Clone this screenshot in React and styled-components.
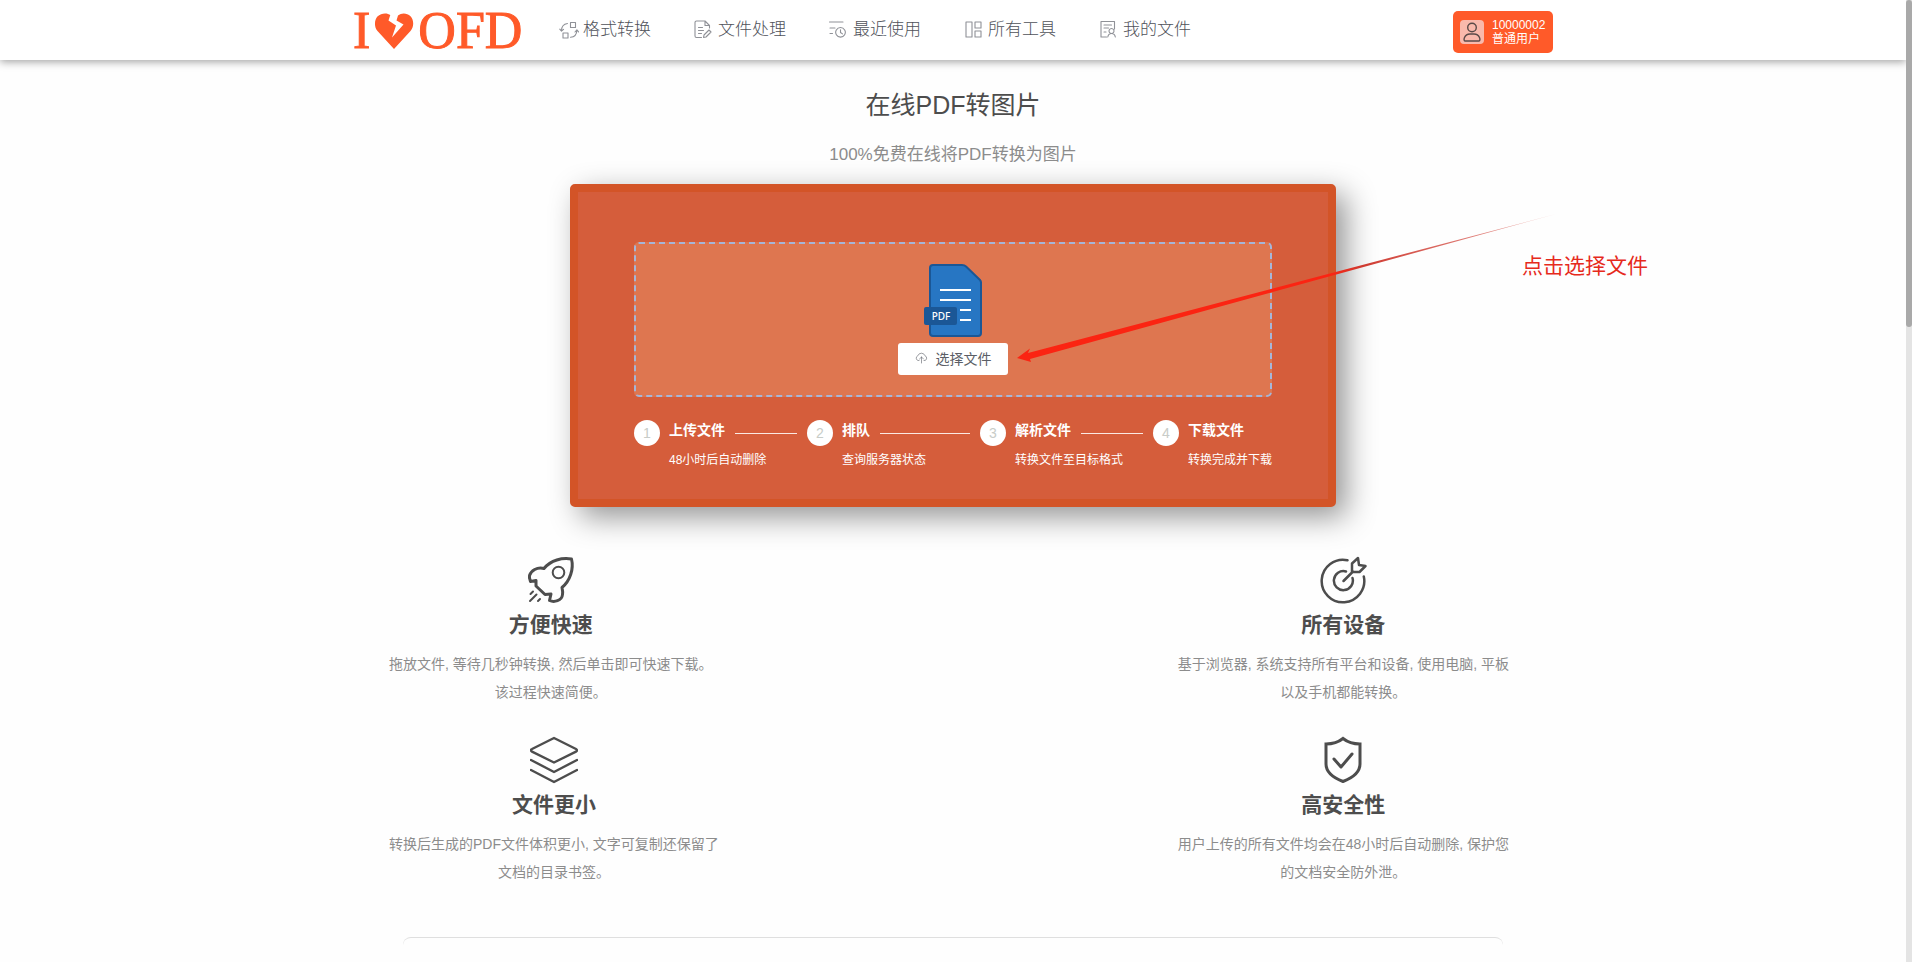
import styled, { createGlobalStyle } from 'styled-components'

const GlobalStyle = createGlobalStyle`
  * {
    box-sizing: border-box;
  }

  body {
    margin: 0;
    font-family: 'Liberation Sans', 'Noto Sans CJK SC', sans-serif;
    color: #4d4d4d;
    background-color: #fefefe;
  }

  h1, h2, p {
    margin: 0;
  }
`

const Shell = styled.div`
  display: flex;
  height: 100vh;
  overflow: hidden;
`

const Page = styled.div`
  flex: 1;
  min-width: 0;
  overflow: hidden;
`

const ScrollTrack = styled.div`
  width: 6px;
  background-color: #e4e4e4;
`

const ScrollThumb = styled.div`
  height: 34%;
  border-radius: 3px;
  background-color: #a9a9a9;
`

const Header = styled.header`
  height: 60px;
  background-color: #fff;
  box-shadow: 0 2px 8px rgba(0, 0, 0, 0.36);
`

const HeaderInner = styled.div`
  display: flex;
  align-items: center;
  max-width: 1200px;
  height: 100%;
  margin: 0 auto;
`

const Logo = styled.a`
  display: flex;
  align-items: center;
  gap: 4px;
  width: 206px;
  padding-top: 2px;
  font-family: 'Liberation Serif', serif;
  font-size: 52px;
  line-height: 60px;
  color: #ff5a29;
  -webkit-text-stroke: 1px #ff5a29;
  text-decoration: none;
`

const Nav = styled.nav`
  display: flex;
  gap: 41px;
`

const NavLink = styled.a`
  display: flex;
  align-items: center;
  gap: 4px;
  min-width: 94px;
  font-size: 17px;
  font-weight: 300;
  line-height: 24px;
  color: #4f525a;
  text-decoration: none;
  white-space: nowrap;

  svg {
    color: #8f9197;
  }
`

const UserButton = styled.button`
  display: flex;
  align-items: center;
  gap: 8px;
  width: 100px;
  height: 42px;
  margin: 4px 0 0 auto;
  padding: 0 7px;
  border: none;
  border-radius: 5px;
  background-color: #ff5a29;
  color: #fff;
  font-family: inherit;
  font-size: 12px;
  line-height: 14px;
  text-align: left;
  cursor: pointer;
`

const Avatar = styled.span`
  display: flex;
  border-radius: 4px;
  background-color: #f9b9ac;
`

const UserText = styled.span`
  display: flex;
  flex-direction: column;
  white-space: nowrap;
`

const Title = styled.h1`
  margin-top: 27px;
  font-size: 25px;
  font-weight: 400;
  line-height: 36px;
  text-align: center;
`

const Subtitle = styled.p`
  margin: 20px 0 17px;
  font-size: 17px;
  line-height: 24px;
  text-align: center;
  color: #8c8c8c;
`

const Panel = styled.section`
  position: relative;
  max-width: 766px;
  margin: 0 auto;
  padding: 50px 56px 29px;
  border: 8px solid #d35427;
  border-radius: 5px;
  background-color: #d55d3b;
  box-shadow: 10px 10px 30px rgba(0, 0, 0, 0.42);
`

const DropZone = styled.div`
  display: flex;
  flex-direction: column;
  align-items: center;
  gap: 6px;
  padding: 20px;
  border: 2px dashed #a5b6d8;
  border-radius: 5px;
  background-color: #de7650;
`

const PickButton = styled.button`
  display: flex;
  align-items: center;
  justify-content: center;
  gap: 8px;
  width: 110px;
  height: 32px;
  padding: 0 0 3px;
  border: none;
  border-radius: 3px;
  background-color: #fff;
  color: #5b5e66;
  font-family: inherit;
  font-size: 14px;
  cursor: pointer;
`

const Steps = styled.ol`
  display: flex;
  margin: 23px 0 0;
  padding: 0;
  list-style: none;
`

const Step = styled.li`
  display: flex;
  flex: ${props => (props.$last ? 'none' : 1)};
  gap: 9px;
  min-width: 0;
  color: #fff;
`

const StepNumber = styled.span`
  flex: none;
  width: 26px;
  height: 26px;
  border-radius: 50%;
  background-color: #fff;
  color: #c8ccc8;
  font-size: 14px;
  line-height: 26px;
  text-align: center;
`

const StepBody = styled.div`
  flex: 1;
`

const StepTitle = styled.div`
  display: flex;
  align-items: center;
  gap: 10px;
  padding-right: 10px;
  font-size: 14px;
  font-weight: 700;
  line-height: 20px;
  white-space: nowrap;
`

const StepLine = styled.span`
  flex: 1;
  height: 1px;
  margin-top: 6px;
  background-color: #fbe9e3;
`

const StepText = styled.p`
  margin-top: 10px;
  font-size: 12px;
  line-height: 20px;
  white-space: nowrap;
`

const ArrowOverlay = styled.svg`
  position: absolute;
  top: 10px;
  left: 428px;
  pointer-events: none;
`

const Hint = styled.span`
  position: absolute;
  top: 58px;
  left: 944px;
  font-size: 21px;
  line-height: 32px;
  color: #e62a1c;
  white-space: nowrap;
`

const Features = styled.section`
  display: flex;
  justify-content: space-between;
  max-width: 1200px;
  margin: 0 auto;
  padding: 49px 44px 0 36px;
`

const FeatureColumn = styled.div`
  display: flex;
  flex-direction: column;
  align-items: flex-start;
  gap: 30px;
`

const Feature = styled.article`
  display: flex;
  flex-direction: column;
  align-items: center;
  text-align: center;
`

const FeatureTitle = styled.h2`
  margin: 6px 0 10px;
  font-size: 21px;
  font-weight: 700;
  line-height: 30px;
`

const FeatureText = styled.p`
  font-size: 14px;
  line-height: 28px;
  color: #8c8c8c;
`

const ContentCard = styled.section`
  max-width: 1100px;
  height: 300px;
  margin: 51px auto 0;
  border-top: 1px solid #dfdfdf;
  border-radius: 8px;
`

const stroke = {
  fill: 'none',
  stroke: 'currentColor',
  strokeLinecap: 'round',
  strokeLinejoin: 'round',
}

function BrokenHeart() {
  return (
    <svg width="40" height="36" viewBox="0 0 40 36" fill="#ff5a29" aria-hidden="true">
      <path d="M20 36 3.5 18C0 14 .3 7 3.4 3.6 7.5-.6 13.500-.2 16.300 2L14.500 7.500 22 12.500 18 24.500 29.500 11.500 22.500 7.500 24 2.500C27.500-.5 33-.3 36.500 3.300 40 7 40.200 13.500 36.500 18Z" />
    </svg>
  )
}

const navIcons = {
  convert: (
    <path d="M11.500 2.500h5v5h-5zM4 13h5v5H4zM8.500 3.500C4.800 4 2.500 7 2.500 10.800M.8 9.200l1.700 2 2-1.800M11.500 17.300c4-.3 6.300-3.300 6.400-7.300M16 12l1.900-2.200L19.600 12" />
  ),
  edit: (
    <path d="M7.500 17.500h-5a1.500 1.500 0 0 1-1.500-1.500V2.500A1.500 1.500 0 0 1 2.500 1H11l4.500 4.500V8M11 1v4.500h4.500M4.500 7.500h4M4.500 10.500h5M4.500 13.500h3M9.500 17.500l.5-2.500 5-5 2 2-5 5z" />
  ),
  recent: (
    <path d="M.5 2h13.500M1 8h5M1 13.500h2.500M11.500 7.500a4.800 4.800 0 1 0 .01 0zM11.500 9.800v2.700l2 1.400" />
  ),
  tools: <path d="M2 2h6v15H2zM11 2h6v6h-6zM11 11h6v6h-6z" />,
  files: (
    <path d="M7.500 17h-5.500V1.500h13.500V9M5 5h7.500M5 8h4.500M5 12h2M12.500 8.500a2.500 2.500 0 1 0 .01 0zM8.800 17c.3-2 1.500-3.500 3.700-3.500s3.500 1.500 3.800 3.500" />
  ),
}

const navItems = [
  { icon: 'convert', label: '格式转换' },
  { icon: 'edit', label: '文件处理' },
  { icon: 'recent', label: '最近使用' },
  { icon: 'tools', label: '所有工具' },
  { icon: 'files', label: '我的文件' },
]

const steps = [
  { title: '上传文件', text: '48小时后自动删除' },
  { title: '排队', text: '查询服务器状态' },
  { title: '解析文件', text: '转换文件至目标格式' },
  { title: '下载文件', text: '转换完成并下载' },
]

const featureIcons = {
  rocket: (
    <>
      <path strokeWidth="3" d="M44.500 3C35 1.500 24 4 17 12.500 10 10.500 4 15 2.500 19.500 2 21.500 2.800 23.500 3.500 25.500L9 24.500V30L18 38.500 24 38 22.500 44.500C27 46.500 35 45 35.500 38.500 36 36 35.500 34 35 31.500 43 25 47 13 44.500 3Z" />
      <circle cx="31.500" cy="16.500" r="5.800" strokeWidth="2" />
      <path strokeWidth="2" d="M6 35.500 3.500 38M9.500 38.500 3 45M13 43l-2 2" />
    </>
  ),
  layers: (
    <path strokeWidth="2.400" d="M24 2 46 13c1.300.7 1.300 2 0 2.600L24 26.500 2 15.600c-1.300-.6-1.300-2 0-2.600ZM1 24l23 12 23-12M1 34l23 12 23-12" />
  ),
  target: (
    <>
      <path strokeWidth="2.500" d="M28.500 4.200A21.300 21.300 0 1 0 44.800 20.500M27 15.500A9.500 9.500 0 1 0 33.500 22" />
      <path strokeWidth="2.500" d="M24.500 25 34 15.500M33 7.500 39 2l1 7 6.500 1-6 6H33Z" />
    </>
  ),
  shield: (
    <>
      <path strokeWidth="3" strokeLinejoin="miter" d="M24 2.500C29 6.500 35 8 41 8v20c0 8-8 14-17 17.500C15 42 7 36 7 28V8c6 0 12-1.500 17-5.500Z" />
      <path strokeWidth="3" d="m15 23 7 8 11-13" />
    </>
  ),
}

const featureColumns = [
  [
    {
      icon: 'rocket',
      title: '方便快速',
      lines: ['拖放文件, 等待几秒钟转换, 然后单击即可快速下载。', '该过程快速简便。'],
    },
    {
      icon: 'layers',
      title: '文件更小',
      lines: ['转换后生成的PDF文件体积更小, 文字可复制还保留了', '文档的目录书签。'],
    },
  ],
  [
    {
      icon: 'target',
      title: '所有设备',
      lines: ['基于浏览器, 系统支持所有平台和设备, 使用电脑, 平板', '以及手机都能转换。'],
    },
    {
      icon: 'shield',
      title: '高安全性',
      lines: ['用户上传的所有文件均会在48小时后自动删除, 保护您', '的文档安全防外泄。'],
    },
  ],
]

function PdfIcon() {
  return (
    <svg width="58" height="73" viewBox="0 0 58 73" role="img" aria-label="PDF">
      <path d="M9 1h29c2 0 3 .5 4 1.500L56 16c.7.8 1 1.500 1 2.500V69a3 3 0 0 1-3 3H9a3 3 0 0 1-3-3V4a3 3 0 0 1 3-3Z" fill="#2776c3" stroke="#1b5796" strokeWidth="2" />
      <path d="M16 26h31M16 36h31M36 46h11M36 56h11" stroke="#fff" strokeWidth="2" />
      <rect y="43" width="33" height="18" rx="2" fill="#1b5796" />
      <text x="17" y="56" fill="#fff" fontFamily="'Noto Sans', sans-serif" fontSize="10" fontWeight="500" textAnchor="middle">PDF</text>
    </svg>
  )
}

function UploadSection() {
  return (
    <Panel>
      <DropZone>
        <PdfIcon />
        <PickButton type="button">
          <svg width="13" height="12" viewBox="0 0 13 12" {...stroke} strokeWidth="0.6" aria-hidden="true">
            <path d="M4 8.500H3A2.500 2.500 0 0 1 2.800 3.800 3.800 3.800 0 0 1 10 3.800 2.500 2.500 0 0 1 10 8.500H9M6.500 11V5M4.500 7l2-2 2 2" />
          </svg>
          选择文件
        </PickButton>
      </DropZone>

      <Steps>
        {steps.map((step, index) => (
          <Step key={step.title} $last={index === steps.length - 1}>
            <StepNumber>{index + 1}</StepNumber>
            <StepBody>
              <StepTitle>
                {step.title}
                {index < steps.length - 1 && <StepLine />}
              </StepTitle>
              <StepText>{step.text}</StepText>
            </StepBody>
          </Step>
        ))}
      </Steps>

      <ArrowOverlay width="560" height="170" viewBox="0 0 560 170" aria-hidden="true">
        <defs>
          <linearGradient id="arrowFade">
            <stop offset="0.58" stopColor="#fb2412" />
            <stop offset="0.64" stopColor="#cf3a30" />
            <stop offset="1" stopColor="#cf3a30" stopOpacity="0.4" />
          </linearGradient>
        </defs>
        <path d="M11 156 24 146.500 22 151 550 12 24 157 25 160Z" fill="url(#arrowFade)" />
      </ArrowOverlay>
      <Hint>点击选择文件</Hint>
    </Panel>
  )
}

function App() {
  return (
    <>
      <GlobalStyle />
      <Shell>
        <Page>
          <Header>
            <HeaderInner>
              <Logo href="#">
                <span>I</span>
                <BrokenHeart />
                <span>OFD</span>
              </Logo>
              <Nav>
                {navItems.map(item => (
                  <NavLink key={item.icon} href="#">
                    <svg width="20" height="20" viewBox="0 0 20 20" {...stroke} strokeWidth="1.100" aria-hidden="true">
                      {navIcons[item.icon]}
                    </svg>
                    {item.label}
                  </NavLink>
                ))}
              </Nav>
              <UserButton type="button">
                <Avatar>
                  <svg width="24" height="24" viewBox="0 0 24 24" {...stroke} color="#5a4a48" strokeWidth="1.400" aria-hidden="true">
                    <circle cx="12" cy="7.500" r="4.300" />
                    <path d="M5 21c-2 0-1-7 5-7h4c6 0 7 7 5 7Z" />
                  </svg>
                </Avatar>
                <UserText>
                  <span>10000002</span>
                  <span>普通用户</span>
                </UserText>
              </UserButton>
            </HeaderInner>
          </Header>

          <main>
            <Title>在线PDF转图片</Title>
            <Subtitle>100%免费在线将PDF转换为图片</Subtitle>
            <UploadSection />
            <Features>
              {featureColumns.map((column, index) => (
                <FeatureColumn key={index}>
                  {column.map(feature => (
                    <Feature key={feature.title}>
                      <svg width="48" height="48" viewBox="0 0 48 48" {...stroke} aria-hidden="true">
                        {featureIcons[feature.icon]}
                      </svg>
                      <FeatureTitle>{feature.title}</FeatureTitle>
                      {feature.lines.map(line => (
                        <FeatureText key={line}>{line}</FeatureText>
                      ))}
                    </Feature>
                  ))}
                </FeatureColumn>
              ))}
            </Features>
            <ContentCard />
          </main>
        </Page>
        <ScrollTrack>
          <ScrollThumb />
        </ScrollTrack>
      </Shell>
    </>
  )
}

export default App
